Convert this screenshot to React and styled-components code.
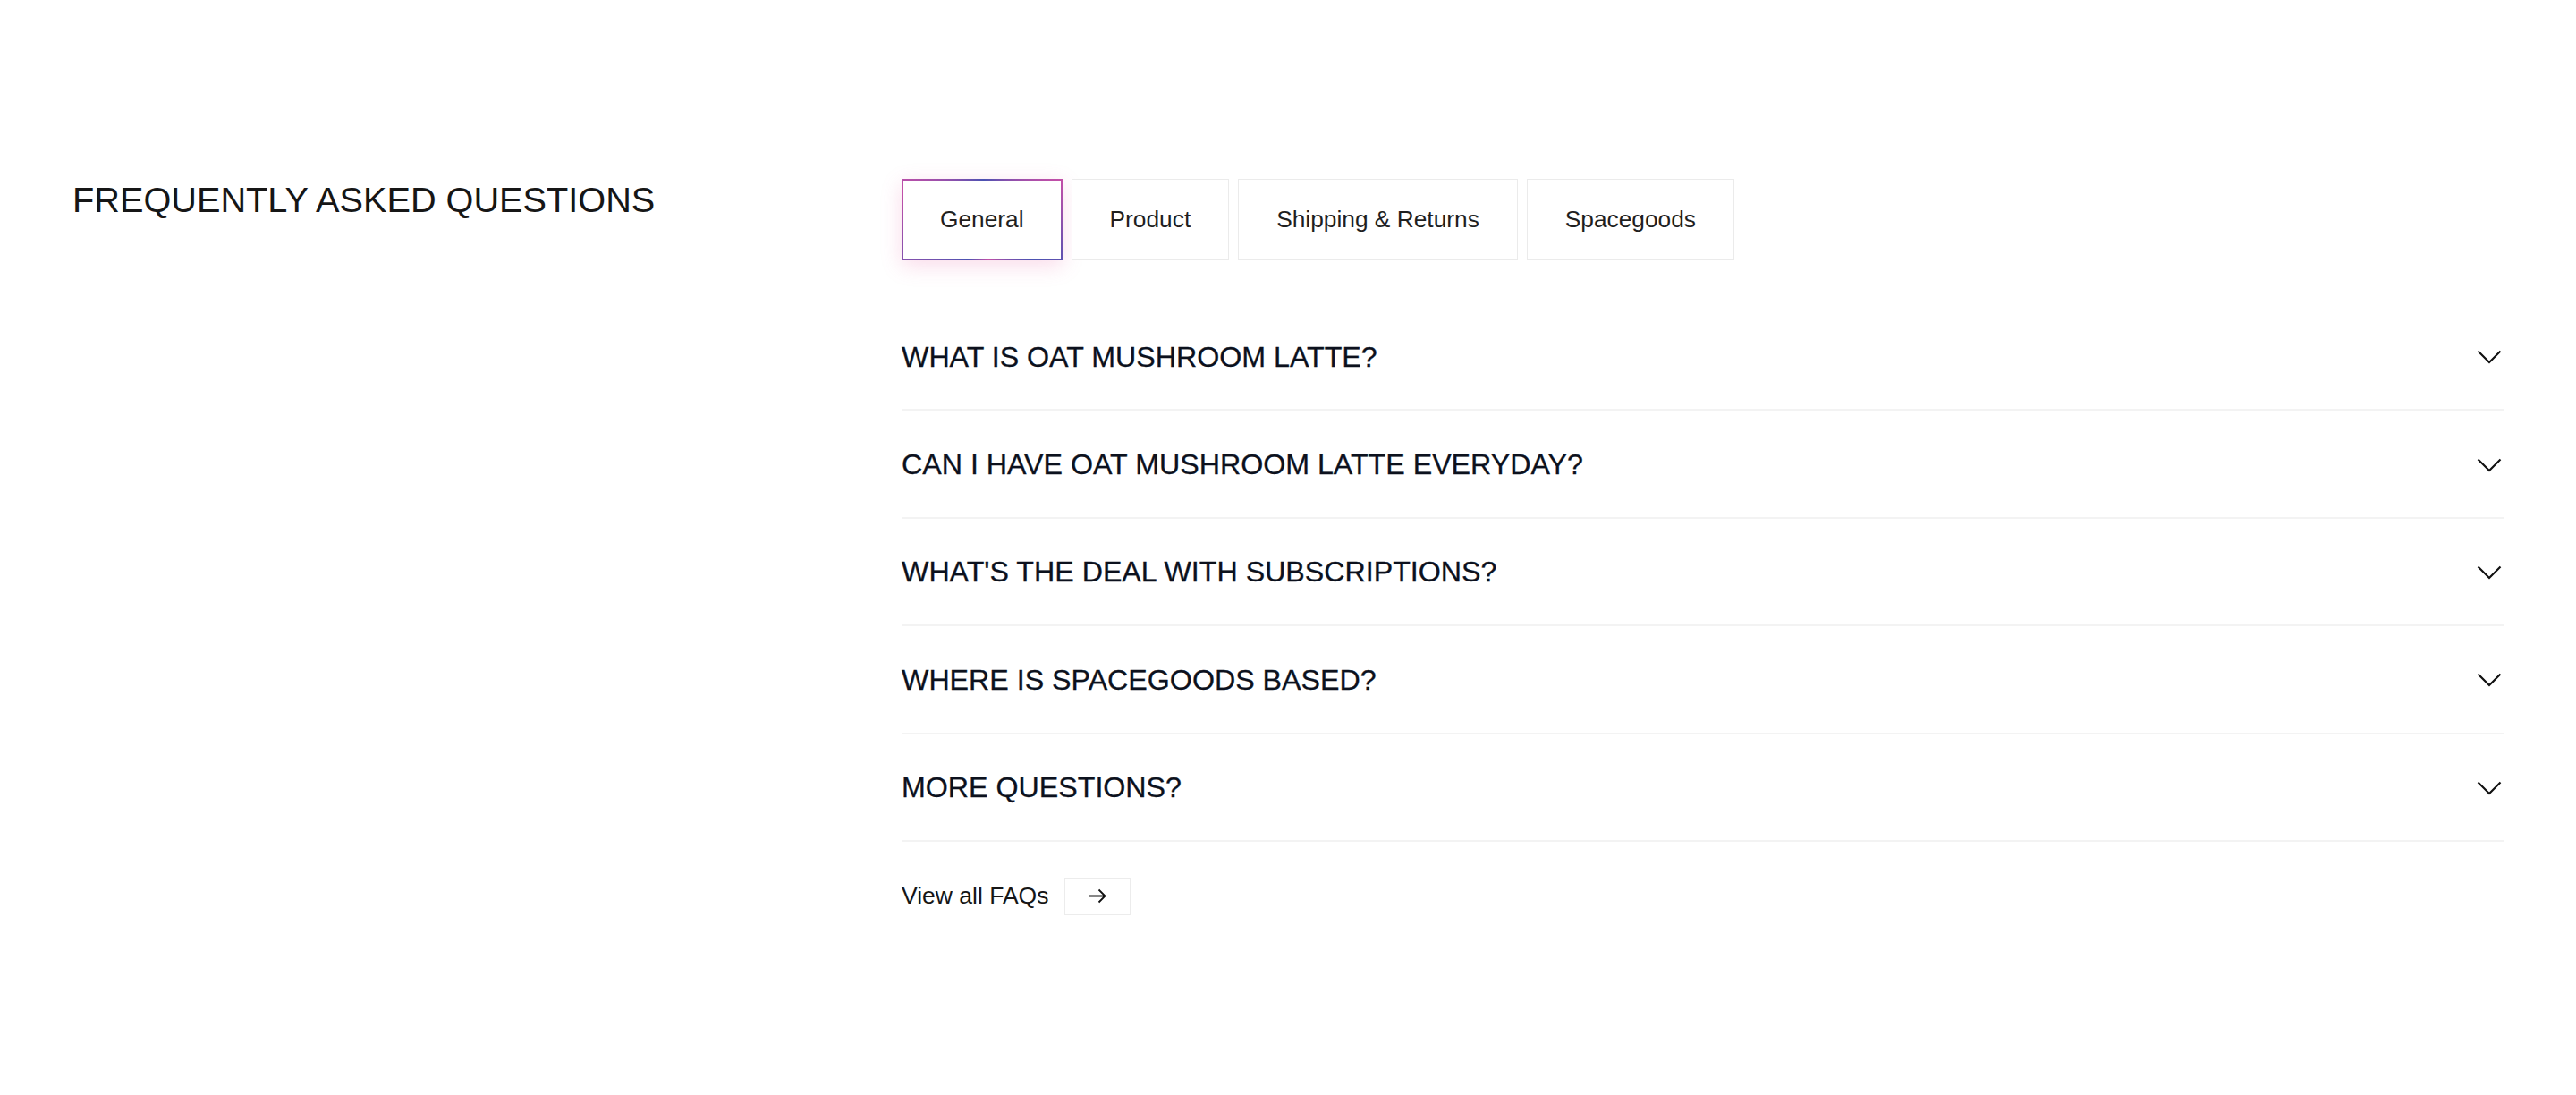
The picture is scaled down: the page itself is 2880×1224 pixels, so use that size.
import React, { useState } from 'react';
import styled, { createGlobalStyle } from 'styled-components';

const GlobalStyle = createGlobalStyle`
  body {
    margin: 0;
    background: #ffffff;
    font-family: 'Liberation Sans', Arial, sans-serif;
  }
`;

const Section = styled.section`
  display: grid;
  grid-template-columns: 927px 1fr;
  padding: 200px 80px 160px 81px;
`;

const Title = styled.h2`
  margin: 0;
  font-size: 39.7px;
  font-weight: 400;
  line-height: 1.2;
  color: #161616;
`;

const Content = styled.div`
  display: flex;
  flex-direction: column;
`;

const Tabs = styled.div`
  display: flex;
  gap: 10px;
`;

const Tab = styled.button`
  box-sizing: border-box;
  height: 91px;
  padding: 0 ${({ $active }) => ($active ? '41px' : '42px')};
  border: ${({ $active }) => ($active ? '2px solid transparent' : '1px solid #ebebeb')};
  background: ${({ $active }) =>
    $active
      ? 'linear-gradient(#fff, #fff) padding-box, conic-gradient(from 200deg, #4a52b2, #c24fa8 25%, #4a52b2 45%, #c24fa8 62%, #4a52b2 80%, #c24fa8 92%, #4a52b2) border-box'
      : '#fff'};
  box-shadow: ${({ $active }) => ($active ? '0 6px 22px rgba(232, 90, 160, 0.22)' : 'none')};
  font-family: inherit;
  font-size: 26.3px;
  color: #1f1f1f;
  cursor: pointer;
`;

const List = styled.div`
  margin-top: 48px;
`;

const Row = styled.div`
  display: flex;
  align-items: center;
  justify-content: space-between;
  box-sizing: border-box;
  height: 120.4px;
  padding-top: 2px;
  border-bottom: 2px solid #f3f3f3;
  cursor: pointer;
`;

const Question = styled.span`
  font-size: 32.2px;
  color: #0c111d;
  -webkit-text-stroke: 0.3px #0c111d;
`;

const Chevron = styled.svg`
  width: 28px;
  height: 16px;
  margin-right: 3px;
  transform: ${({ $open }) => ($open ? 'rotate(180deg)' : 'none')};
`;

const Footer = styled.div`
  display: flex;
  align-items: center;
  gap: 18px;
  margin-top: 40px;
`;

const FooterText = styled.span`
  font-size: 26.5px;
  color: #161616;
`;

const ArrowButton = styled.button`
  display: flex;
  align-items: center;
  justify-content: center;
  width: 74px;
  height: 42px;
  padding: 0;
  border: 1px solid #ececec;
  background: #fff;
  cursor: pointer;
`;

const tabs = ['General', 'Product', 'Shipping & Returns', 'Spacegoods'];

const questions = [
  'WHAT IS OAT MUSHROOM LATTE?',
  'CAN I HAVE OAT MUSHROOM LATTE EVERYDAY?',
  "WHAT'S THE DEAL WITH SUBSCRIPTIONS?",
  'WHERE IS SPACEGOODS BASED?',
  'MORE QUESTIONS?',
];

export default function App() {
  const [activeTab, setActiveTab] = useState('General');
  const [open, setOpen] = useState(null);

  return (
    <>
      <GlobalStyle />
      <Section>
        <Title>FREQUENTLY ASKED QUESTIONS</Title>
        <Content>
          <Tabs>
            {tabs.map(tab => (
              <Tab key={tab} $active={tab === activeTab} onClick={() => setActiveTab(tab)}>
                {tab}
              </Tab>
            ))}
          </Tabs>
          <List>
            {questions.map((q, i) => (
              <Row key={q} onClick={() => setOpen(open === i ? null : i)}>
                <Question>{q}</Question>
                <Chevron $open={open === i} viewBox="0 0 28 16" fill="none">
                  <polyline points="1.5,1.5 14,14 26.5,1.5" stroke="#111" strokeWidth="2.2" />
                </Chevron>
              </Row>
            ))}
          </List>
          <Footer>
            <FooterText>View all FAQs</FooterText>
            <ArrowButton aria-label="View all FAQs">
              <svg width="21" height="17" viewBox="0 0 21 17" fill="none">
                <path d="M1 8.5h18M11.5 1.5 18.5 8.5 11.5 15.5" stroke="#111" strokeWidth="1.8" />
              </svg>
            </ArrowButton>
          </Footer>
        </Content>
      </Section>
    </>
  );
}
